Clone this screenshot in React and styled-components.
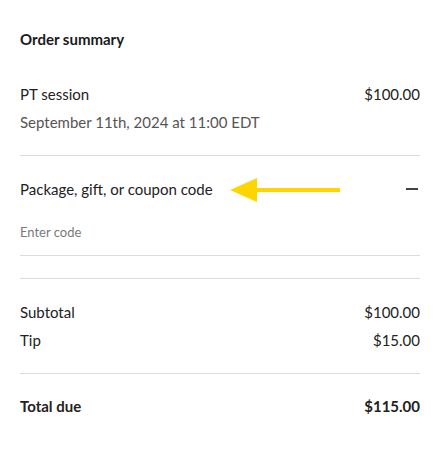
import React from "react";
import styled, { createGlobalStyle } from "styled-components";

const Global = createGlobalStyle`
  html, body { margin: 0; padding: 0; background: #fff; }
  body { font-family: "Source Sans Pro", Lato, "Noto Sans", sans-serif; color: #1f1f1f; }
`;

const Panel = styled.div`
  width: 445px;
  box-sizing: border-box;
  padding: 29px 25px 0 20px;
  display: flex;
  flex-direction: column;
`;

const Title = styled.h2`
  margin: 0;
  font-size: 15px;
  line-height: 20px;
  font-weight: 700;
  color: #1a1a1a;
`;

const Row = styled.div`
  display: flex;
  justify-content: space-between;
  align-items: center;
  font-size: 15px;
  line-height: 20px;
  font-weight: ${(p) => (p.$bold ? 700 : 400)};
  margin-top: ${(p) => p.$mt || 0}px;
  color: #222;
  position: relative;
`;

const Sub = styled.div`
  font-size: 15px;
  line-height: 20px;
  color: #555;
  margin-top: ${(p) => p.$mt || 0}px;
`;

const Divider = styled.hr`
  border: none;
  height: 1px;
  background: #dcdcdc;
  margin: ${(p) => p.$mt || 0}px 0 0 0;
`;

const Input = styled.input`
  border: none;
  outline: none;
  padding: 0;
  margin-top: ${(p) => p.$mt || 0}px;
  font-family: inherit;
  font-size: 13px;
  line-height: 18px;
  height: 18px;
  color: #333;
  background: transparent;
  &::placeholder { color: #7a7a7a; }
`;

const Minus = styled.span`
  width: 12px;
  height: 2px;
  background: #444;
  margin-right: 2px;
`;

const Arrow = styled.svg`
  position: absolute;
  left: 208px;
  top: -3px;
`;

export default function App() {
  return (
    <>
      <Global />
      <Panel>
        <Title>Order summary</Title>
        <Row $mt={35}>
          <span>PT session</span>
          <span>$100.00</span>
        </Row>
        <Sub $mt={8}>September 11th, 2024 at 11:00 EDT</Sub>
        <Divider $mt={23} />
        <Row $mt={23}>
          <span>Package, gift, or coupon code</span>
          <Minus />
          <Arrow width="116" height="28" viewBox="0 0 116 28">
            <polygon points="2,14 29,2 29,26" fill="#FFD500" />
            <rect x="28" y="12" width="84" height="4" fill="#FFD500" />
          </Arrow>
        </Row>
        <Input $mt={24} placeholder="Enter code" />
        <Divider $mt={14} />
        <Divider $mt={22} />
        <Row $mt={23}>
          <span>Subtotal</span>
          <span>$100.00</span>
        </Row>
        <Row $mt={8}>
          <span>Tip</span>
          <span>$15.00</span>
        </Row>
        <Divider $mt={23} />
        <Row $mt={22} $bold>
          <span>Total due</span>
          <span>$115.00</span>
        </Row>
      </Panel>
    </>
  );
}
